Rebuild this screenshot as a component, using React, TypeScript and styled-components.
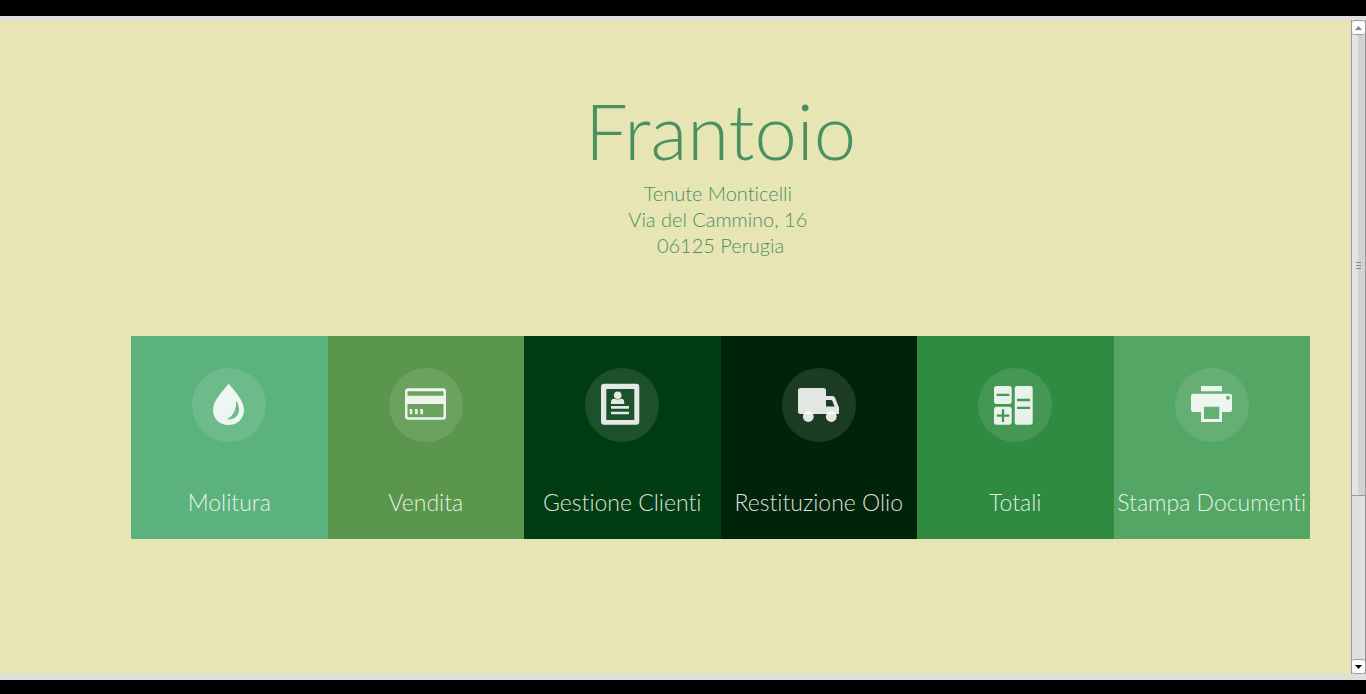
import React from "react";
import styled, { createGlobalStyle } from "styled-components";

const GlobalStyle = createGlobalStyle`
  * { box-sizing: border-box; }
  body {
    margin: 0;
    background: #000;
    font-family: Lato, "Liberation Sans", sans-serif;
    font-weight: 300;
    font-variant-ligatures: none;
  }
`;

const Frame = styled.div`
  display: flex;
  min-height: 100vh;
  border-top: 16px solid #000;
  border-bottom: 14px solid #000;
`;

const Viewport = styled.div`
  display: flex;
  flex: 1;
  background: #e7e5b4;
  border-top: 4px solid #dfdfdf;
  border-bottom: 6px solid #dfdfdf;
`;

const Page = styled.main`
  flex: 1;
  padding: 73px 41px 40px 131px;
`;

const Header = styled.header`
  color: #4a9063;
  text-align: center;
`;

const Title = styled.h1`
  margin: 0;
  font-size: 76px;
  line-height: 76px;
  font-weight: 300;
`;

const Address = styled.address`
  margin-top: 11px;
  font-size: 20px;
  line-height: 26px;
  font-style: normal;
`;

const Menu = styled.nav`
  display: grid;
  grid-template-columns: repeat(6, minmax(0, 1fr));
  margin-top: 78px;
`;

const Tile = styled.a<{ $color: string }>`
  display: flex;
  flex-direction: column;
  align-items: center;
  padding: 32px 0 22px;
  background: ${(p) => p.$color};
  color: rgba(255, 255, 255, 0.88);
  text-decoration: none;
`;

const Badge = styled.span`
  display: block;
  width: 74px;
  height: 74px;
  border-radius: 50%;
  background: rgba(255, 255, 255, 0.11);

  svg {
    display: block;
    fill: currentColor;
  }
`;

const Label = styled.span`
  margin-top: 45px;
  font-size: 23px;
  line-height: 30px;
  white-space: nowrap;
`;

const ScrollBar = styled.div`
  display: flex;
  flex-direction: column;
  width: 15px;
  border: 1px solid #999;
  border-width: 0 1px;
  background: #dfdfdf;
`;

const Arrow = styled.button<{ $color: string }>`
  display: flex;
  align-items: center;
  justify-content: center;
  width: 100%;
  height: 15px;
  padding: 0;
  border: 1px solid #999;
  border-width: 1px 0;
  border-radius: 3px;
  background: #fff;
  color: ${(p) => p.$color};
`;

const Thumb = styled.div`
  display: flex;
  flex: 461;
  align-items: center;
  justify-content: center;
  border-bottom: 1px solid #999;
  background: linear-gradient(90deg, #e4e4e4 50%, #d2d2d2 50%);
`;

const Track = styled.div`
  flex: 163;
`;

const icons = {
  drop: (
    <path
      fillRule="evenodd"
      d="M36.7 15.7C41 21.500 52 31.500 52 42C52 51 45 57 36.500 57S21 51 21 42C21 31.500 32.500 21.500 36.700 15.700ZM44 32.700C44.500 40.500 42 47.500 35 51.300C41 52.500 47 48.500 47 41.500C47 38 46 35 44 32.700Z"
    />
  ),
  card: (
    <path
      fillRule="evenodd"
      d="M19 20.300H54a3 3 0 0 1 3 3V48.700a3 3 0 0 1-3 3H19a3 3 0 0 1-3-3V23.300a3 3 0 0 1 3-3ZM19.500 23.300a1 1 0 0 0-1 1V27.700H54.500V24.300a1 1 0 0 0-1-1ZM18.500 36V48.300a1 1 0 0 0 1 1H53.500a1 1 0 0 0 1-1V36ZM20.700 41h2.600v5.300h-2.600ZM26 41h2.700v5.300H26ZM31.300 41H34v5.300h-2.700Z"
    />
  ),
  contact: (
    <>
      <path
        fillRule="evenodd"
        d="M19 15.700H51.300a3 3 0 0 1 3 3V53.700a3 3 0 0 1-3 3H19a3 3 0 0 1-3-3V18.700a3 3 0 0 1 3-3ZM21.300 21V52H49.300V21Z"
      />
      <circle cx="32.700" cy="27.200" r="3.800" />
      <path d="M26 36V34a3.300 3.300 0 0 1 3.300-3.300C31 31.800 34.300 31.800 36 30.700A3.300 3.300 0 0 1 39.200 34V36ZM26 38H44v2.700H26ZM26 43.700H44v2.600H26Z" />
    </>
  ),
  truck: (
    <>
      <path
        fillRule="evenodd"
        d="M18.500 20H41.500A2.500 2.500 0 0 1 44 22.500V28H50.700Q52.200 28 53 29.500L56 37.200Q57 38.500 57 40V46H18.500A2.500 2.500 0 0 1 16 43.500V22.500A2.500 2.500 0 0 1 18.500 20ZM44 32V38.500H52.500L50.300 32.800Q50 32 49 32Z"
      />
      <circle cx="26.300" cy="48.500" r="5.400" />
      <circle cx="49.300" cy="48.500" r="5.400" />
    </>
  ),
  totals: (
    <path
      fillRule="evenodd"
      d="M18.500 18H31.200a2.500 2.500 0 0 1 2.500 2.500V33.500a2.500 2.500 0 0 1-2.500 2.500H18.500a2.500 2.500 0 0 1-2.500-2.500V20.500a2.500 2.500 0 0 1 2.500-2.500ZM18.700 25.700V28H31.300V25.700ZM18.500 38.700H31.200a2.500 2.500 0 0 1 2.500 2.500V54.200a2.500 2.500 0 0 1-2.500 2.500H18.500a2.500 2.500 0 0 1-2.500-2.500V41.200a2.500 2.500 0 0 1 2.500-2.500ZM23.800 41.300V46.500H18.700V48.800H23.800V54H26.200V48.800H31.300V46.500H26.200V41.300ZM39.200 18H52.200a2.500 2.500 0 0 1 2.500 2.500V54.200a2.500 2.500 0 0 1-2.500 2.500H39.200a2.500 2.500 0 0 1-2.500-2.500V20.500a2.500 2.500 0 0 1 2.500-2.500ZM39 30.700V33.300H52V30.700ZM39 38.700V41H52V38.700Z"
    />
  ),
  printer: (
    <path
      fillRule="evenodd"
      d="M26 18H47V23.300H26ZM18.500 25.700H54.500A2.500 2.500 0 0 1 57 28.200V41.500A2.500 2.500 0 0 1 54.500 44H47V54H26V44H18.500A2.500 2.500 0 0 1 16 41.500V28.200A2.500 2.500 0 0 1 18.500 25.700ZM29 38.700V51H44.300V38.700ZM53 27.700a2 2 0 1 0 0 4a2 2 0 1 0 0-4Z"
    />
  ),
};

const entries: { label: string; color: string; icon: keyof typeof icons }[] = [
  { label: "Molitura", color: "#5cb27c", icon: "drop" },
  { label: "Vendita", color: "#5a974c", icon: "card" },
  { label: "Gestione Clienti", color: "#003c12", icon: "contact" },
  { label: "Restituzione Olio", color: "#002408", icon: "truck" },
  { label: "Totali", color: "#2f8b40", icon: "totals" },
  { label: "Stampa Documenti", color: "#53a663", icon: "printer" },
];

export default function App() {
  return (
    <>
      <GlobalStyle />
      <Frame>
        <Viewport>
          <Page>
            <Header>
              <Title>Frantoio</Title>
              <Address>
                Tenute Monticelli&nbsp;
                <br />
                Via del Cammino, 16&nbsp;
                <br />
                06125 Perugia
              </Address>
            </Header>
            <Menu>
              {entries.map((entry) => (
                <Tile key={entry.label} href="#" $color={entry.color}>
                  <Badge>
                    <svg width="74" height="74" viewBox="0 0 74 74" aria-hidden="true">
                      {icons[entry.icon]}
                    </svg>
                  </Badge>
                  <Label>{entry.label}</Label>
                </Tile>
              ))}
            </Menu>
          </Page>
          <ScrollBar>
            <Arrow type="button" aria-label="Scroll up" $color="#888">
              <svg width="7" height="4" viewBox="0 0 7 4" fill="currentColor">
                <path d="M0 4L3.500 0L7 4Z" />
              </svg>
            </Arrow>
            <Thumb>
              <svg width="5" height="7" viewBox="0 0 5 7" fill="#888">
                <path d="M0 0h5v1H0ZM0 3h5v1H0ZM0 6h5v1H0Z" />
              </svg>
            </Thumb>
            <Track />
            <Arrow type="button" aria-label="Scroll down" $color="#000">
              <svg width="7" height="4" viewBox="0 0 7 4" fill="currentColor">
                <path d="M0 0H7L3.500 4Z" />
              </svg>
            </Arrow>
          </ScrollBar>
        </Viewport>
      </Frame>
    </>
  );
}
